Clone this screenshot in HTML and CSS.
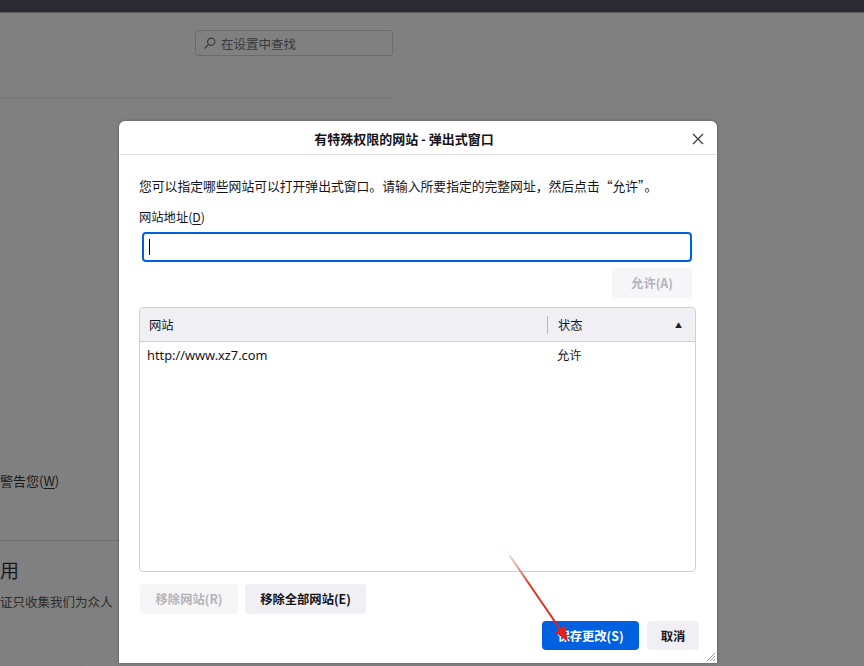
FILE: index.html
```html
<!DOCTYPE html>
<html lang="zh-CN">
<head>
<meta charset="utf-8">
<title>有特殊权限的网站 - 弹出式窗口</title>
<link rel="stylesheet" href="styles.css">
</head>
<body>
<div class="topbar"></div>
<div class="page">
  <div class="search-row">
    <div class="search">
      <svg class="search-icon" width="12" height="12" viewBox="0 0 12 12"><circle cx="7.2" cy="4.8" r="3.6" fill="none" stroke="#3c3c3c" stroke-width="1.2"/><path d="M4.6 7.4 L1 11" stroke="#3c3c3c" stroke-width="1.3" stroke-linecap="round"/></svg>
      <span>在设置中查找</span>
    </div>
  </div>
  <div class="rule top-rule"></div>
  <div class="warn">警告您(<u>W</u>)</div>
  <div class="rule mid-rule"></div>
  <div class="big">用</div>
  <div class="small">证只收集我们为众人</div>
  <div class="cut">止 此 收 集 我 们 只 收 集</div>
</div>

<div class="dialog">
  <div class="dlg-head">
    <div class="dlg-title">有特殊权限的网站 - 弹出式窗口</div>
    <svg class="close" width="12" height="12" viewBox="0 0 12 12"><path d="M1 1 L11 11 M11 1 L1 11" stroke="#3a3a3a" stroke-width="1.2"/></svg>
  </div>
  <div class="dlg-body">
    <p class="desc">您可以指定哪些网站可以打开弹出式窗口。请输入所要指定的完整网址，然后点击“允许”。</p>
    <div class="label">网站地址(<u>D</u>)</div>
    <div class="input"><span class="caret"></span></div>
    <div class="allow-row"><button class="btn disabled">允许(A)</button></div>
    <div class="table">
      <div class="thead">
        <div class="th site">网站</div>
        <div class="th status">状态<span class="sort">▲</span></div>
      </div>
      <div class="trow">
        <div class="td site">http://www.xz7.com</div>
        <div class="td status">允许</div>
      </div>
    </div>
    <div class="remove-row">
      <button class="btn disabled">移除网站(R)</button>
      <button class="btn strong">移除全部网站(E)</button>
    </div>
    <div class="footer">
      <button class="btn primary">保存更改(S)</button>
      <button class="btn strong">取消</button>
    </div>
  </div>
  <svg class="grip" width="11" height="11" viewBox="0 0 11 11"><path d="M10 2 L2 10 M10 5 L5 10 M10 8 L8 10" stroke="#9a9a9a" stroke-width="1"/></svg>
</div>

<svg class="arrow" width="80" height="100" viewBox="0 0 80 100">
  <defs>
    <linearGradient id="g" x1="0" y1="0" x2="1" y2="1">
      <stop offset="0" stop-color="#e8b0a8" stop-opacity="0.6"/>
      <stop offset="0.35" stop-color="#e23a2a"/>
      <stop offset="1" stop-color="#e0201a"/>
    </linearGradient>
  </defs>
  <path d="M8 4 L60 80" stroke="url(#g)" stroke-width="2" stroke-linecap="round"/>
  <path d="M66 90 L53 80 L63 74 Z" fill="#e0201a"/>
</svg>
</body>
</html>
```
FILE: styles.css
```css
html, body {
  margin: 0;
  padding: 0;
}
body {
  width: 864px;
  height: 666px;
  overflow: hidden;
  background: #808080;
  font-family: "Noto Sans CJK SC", "Noto Sans", sans-serif;
  position: relative;
}
.topbar {
  height: 12px;
  background: #2b2a33;
  border-bottom: 1px solid #5a5a5e;
}
.page {
  display: flex;
  flex-direction: column;
  color: #1e1e1e;
}
.search-row {
  padding-left: 195px;
  padding-top: 17px;
}
.search {
  width: 198px;
  height: 26px;
  border: 1px solid #6c6c6c;
  border-radius: 3px;
  display: flex;
  align-items: center;
  gap: 5px;
  padding-left: 8px;
  box-sizing: border-box;
  font-size: 12.5px;
  color: #3a3a3a;
}
.search-icon { flex: none; }
.rule {
  height: 1px;
  background: #747474;
}
.top-rule {
  width: 392px;
  margin-top: 42px;
}
.warn {
  margin-top: 373px;
  font-size: 13px;
  line-height: 18px;
  color: #1a1a1a;
}
.warn u { text-underline-offset: 2px; }
.mid-rule {
  width: 119px;
  margin-top: 50px;
  background: #6e6e6e;
}
.big {
  margin-top: 17px;
  font-size: 19px;
  line-height: 24px;
  color: #1a1a1a;
}
.small {
  margin-top: 11px;
  font-size: 12.5px;
  line-height: 18px;
  color: #2c2c2c;
}
.cut {
  margin-top: 52px;
  font-size: 12.5px;
  line-height: 18px;
  color: #2c2c2c;
}

.dialog {
  position: absolute;
  left: 119px;
  top: 121px;
  width: 598px;
  height: 542px;
  background: #ffffff;
  border-radius: 6px 6px 0 0;
  box-shadow: 0 0 3px rgba(0,0,0,0.35);
  color: #15141a;
}
.dlg-head {
  height: 34px;
  border-bottom: 1px solid #e0e0e6;
  display: flex;
  align-items: center;
  justify-content: center;
  position: relative;
  box-sizing: border-box;
}
.dlg-title {
  font-size: 13px;
  font-weight: 700;
  margin-left: -28px;
  margin-top: 1px;
}
.close {
  position: absolute;
  right: 13px;
  top: 12px;
}
.dlg-body {
  padding: 0 21px 0 20px;
  display: flex;
  flex-direction: column;
}
.desc {
  margin: 22px 0 0 0;
  font-size: 12.8px;
  line-height: 18px;
}
.label {
  margin-top: 13px;
  font-size: 12.3px;
  line-height: 18px;
}
.label u { text-underline-offset: 2px; }
.input {
  margin: 6px 4px 0 3px;
  height: 30px;
  border: 2px solid #0061e0;
  border-radius: 4px;
  box-sizing: border-box;
  display: flex;
  align-items: center;
  padding-left: 5px;
}
.caret {
  width: 1px;
  height: 16px;
  background: #000;
}
.allow-row {
  margin-top: 6px;
  display: flex;
  justify-content: flex-end;
  padding-right: 4px;
}
.btn {
  font-family: "Noto Sans CJK SC", "Noto Sans", sans-serif;
  font-size: 12.3px;
  font-weight: 700;
  border: none;
  border-radius: 4px;
  height: 30px;
  padding: 0 14px;
  background: #f0f0f4;
  color: #15141a;
}
.btn.disabled {
  background: #f6f6f8;
  color: #b4b4b8;
}
.allow-row .btn { width: 80px; }
.table {
  margin-top: 9px;
  height: 265px;
  border: 1px solid #cfcfd8;
  border-radius: 4px;
  box-sizing: border-box;
  overflow: hidden;
}
.thead {
  height: 33px;
  background: #f0f0f4;
  border-bottom: 1px solid #cfcfd8;
  display: flex;
  align-items: center;
  font-size: 12.3px;
}
.th.site, .td.site {
  flex: 1;
  padding-left: 9px;
}
.th.status {
  width: 148px;
  box-sizing: border-box;
  padding-left: 10px;
  border-left: 1px solid #b8b8c0;
  line-height: 18px;
  display: flex;
  align-items: center;
}
.sort {
  margin-left: auto;
  margin-right: 13px;
  font-size: 7px;
  color: #222;
}
.trow {
  display: flex;
  height: 25px;
  align-items: center;
  font-size: 12.3px;
}
.td.site {
  font-family: "Noto Sans", "Open Sans", sans-serif;
  font-size: 12.8px;
  padding-left: 7px;
}
.td.status {
  width: 148px;
  padding-left: 10px;
  box-sizing: border-box;
}
.remove-row {
  margin-top: 12px;
  display: flex;
  gap: 7px;
  padding-left: 1px;
}
.remove-row .btn.disabled { width: 98px; padding: 0; }
.remove-row .btn.strong { width: 121px; padding: 0; }
.footer {
  margin-top: 7px;
  margin-right: -3px;
  display: flex;
  justify-content: flex-end;
  gap: 8px;
}
.footer .btn { height: 29px; }
.btn.primary {
  background: #0061e0;
  color: #ffffff;
  width: 97px;
  padding: 0;
}
.footer .btn.strong { width: 52px; padding: 0; }
.grip {
  position: absolute;
  right: 1px;
  bottom: 1px;
}
.arrow {
  position: absolute;
  left: 502px;
  top: 552px;
}
```
